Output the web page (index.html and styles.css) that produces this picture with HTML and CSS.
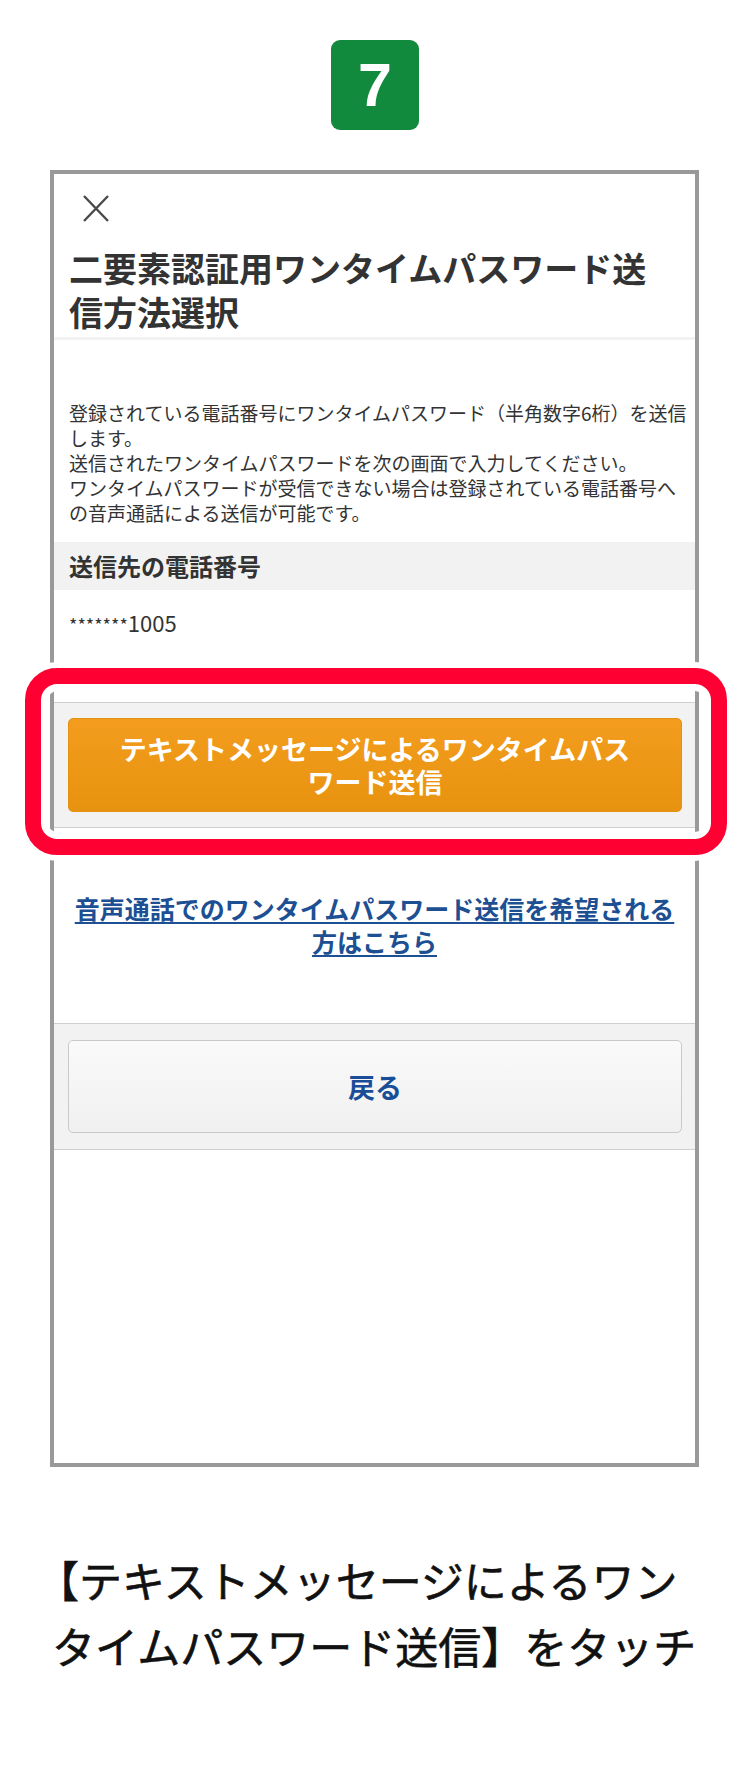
FILE: index.html
```html
<!DOCTYPE html>
<html lang="ja">
<head>
    <meta charset="UTF-8">
    <meta name="viewport" content="width=device-width, initial-scale=1.0">
    <title>ワンタイムパスワード送信方法選択</title>
    <link rel="stylesheet" href="styles.css">
</head>
<body>
    <div class="page">
        <div class="step-badge">7</div>

        <div class="phone-frame">
            <div class="modal-header">
                <svg class="close-icon" width="28" height="27" viewBox="0 0 28 27">
                    <path d="M2 1 L26 26 M26 1 L2 26" stroke="#4a4a4a" stroke-width="2.4" fill="none"/>
                </svg>
                <h1 class="modal-title">二要素認証用ワンタイムパスワード送信方法選択</h1>
            </div>

            <p class="lead">
                登録されている電話番号にワンタイムパスワード（半角数字6桁）を送信<br>します。<br>
                送信されたワンタイムパスワードを次の画面で入力してください。<br>
                ワンタイムパスワードが受信できない場合は登録されている電話番号へ<br>の音声通話による送信が可能です。
            </p>

            <h2 class="section-head">送信先の電話番号</h2>
            <p class="phone-number"><span class="mask">*******</span>1005</p>

            <div class="button-area">
                <button class="btn-primary">テキストメッセージによるワンタイムパスワード送信</button>
            </div>

            <div class="voice-link">
                <a href="#">音声通話でのワンタイムパスワード送信を希望される方はこちら</a>
            </div>

            <div class="button-area back-area">
                <button class="btn-back">戻る</button>
            </div>
        </div>

        <p class="caption">【テキストメッセージによるワンタイムパスワード送信】をタッチ</p>

        <!-- 注目枠 -->
        <div class="highlight"></div>
    </div>
</body>
</html>
```

FILE: styles.css
```css
body {
    margin: 0;
    padding: 0;
    background-color: #fff;
    font-family: "Noto Sans CJK JP", "Noto Sans", sans-serif;
    color: #333;
}
.page {
    position: relative;
    width: 750px;
    height: 1780px;
    padding-top: 40px;
    box-sizing: border-box;
}
.step-badge {
    width: 88px;
    height: 90px;
    margin-left: 331px;
    background-color: #128a3d;
    border-radius: 9px;
    color: #fff;
    font-family: "Liberation Sans", Arial, sans-serif;
    font-weight: bold;
    font-size: 61px;
    display: flex;
    justify-content: center;
    align-items: center;
}
.phone-frame {
    width: 649px;
    height: 1297px;
    margin: 40px 0 0 50px;
    border: 4px solid #999;
    box-sizing: border-box;
}
.modal-header {
    padding-top: 21px;
    border-bottom: 3px solid #f2f2f2;
    padding-bottom: 3px;
}
.close-icon {
    display: block;
    margin-left: 28px;
}
.modal-title {
    margin: 24px 0 0 0;
    padding: 0 30px 0 15px;
    font-size: 34px;
    line-height: 44px;
    font-weight: bold;
    color: #333;
}
.lead {
    margin: 0;
    padding: 60px 2px 17px 15px;
    font-size: 19px;
    line-height: 25px;
    color: #333;
}
.section-head {
    margin: 0;
    padding-left: 15px;
    height: 48px;
    line-height: 48px;
    background-color: #f2f2f2;
    font-size: 24px;
    font-weight: bold;
    color: #333;
}
.phone-number {
    margin: 0;
    padding: 20px 15px 66px;
    font-size: 22px;
    line-height: 24px;
    color: #333;
}
.phone-number .mask {
    font-size: 18px;
}
.button-area {
    background-color: #f2f2f2;
    border-top: 1px solid #cfcfcf;
    border-bottom: 1px solid #cfcfcf;
    padding: 15px 13px 15px 14px;
}
.back-area {
    padding-top: 16px;
    padding-bottom: 16px;
}
.btn-primary, .btn-back {
    display: flex;
    justify-content: center;
    align-items: center;
    width: 100%;
    height: 94px;
    padding: 0 40px;
    box-sizing: border-box;
    border-radius: 5px;
    font-family: inherit;
    font-size: 27px;
    line-height: 33px;
    font-weight: bold;
    cursor: pointer;
}
.btn-primary {
    background: linear-gradient(#f39c1e, #e8930f);
    border: 1px solid #e59213;
    color: #fff;
}
.btn-back {
    height: 93px;
    background: linear-gradient(#fafafa, #f0f0f0);
    border: 1px solid #c9c9c9;
    color: #1a4d97;
}
.voice-link {
    padding: 64px 15px 65px;
    text-align: center;
    font-size: 25px;
    line-height: 33px;
    font-weight: bold;
}
.voice-link a {
    color: #1d4f93;
    text-decoration: underline;
    text-underline-offset: 3px;
}
.caption {
    margin: 79px 0 0 0;
    padding: 0 40px 0 52px;
    text-indent: -16px;
    font-size: 43px;
    line-height: 66px;
    font-weight: normal;
    color: #111;
    -webkit-text-stroke: 0.6px #111;
}
.highlight {
    position: absolute;
    left: 25px;
    top: 668px;
    width: 702px;
    height: 187px;
    border: 16px solid #ff0033;
    border-radius: 32px;
    box-sizing: border-box;
    box-shadow: 0 0 0 6px #fff, inset 0 0 0 7px #fff;
}
```
